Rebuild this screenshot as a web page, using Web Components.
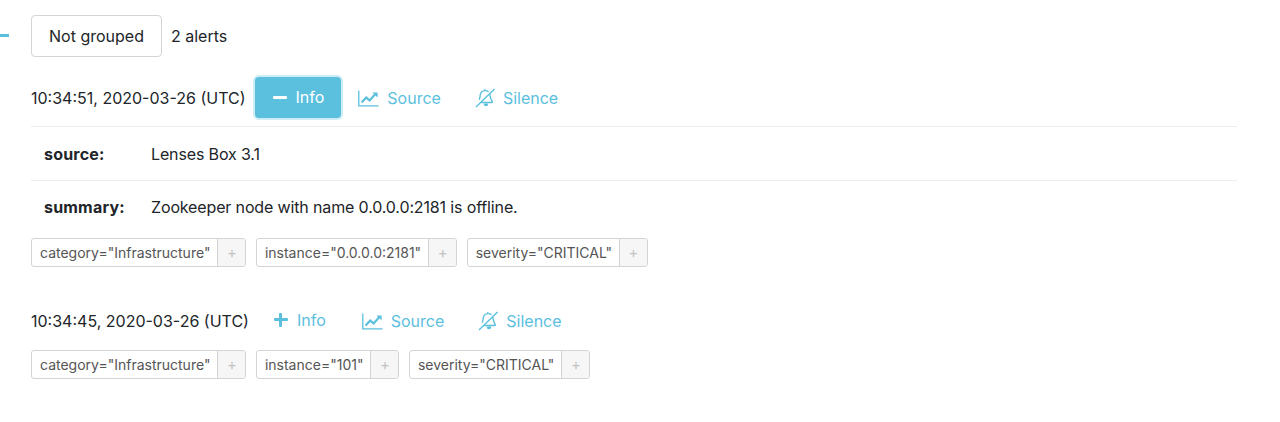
<!DOCTYPE html>
<html>
<head>
<meta charset="utf-8">
<style>
    html, body { margin: 0; background: #fff; }
    body { font-family: Inter, "Liberation Sans", sans-serif; color: #212529; overflow: hidden; height: 422px; }
</style>
</head>
<body>
<alert-group>
    <alert-entry time="10:34:51, 2020-03-26 (UTC)" open>
        <alert-annotation name="source">Lenses Box 3.1</alert-annotation>
        <alert-annotation name="summary">Zookeeper node with name 0.0.0.0:2181 is offline.</alert-annotation>
        <label-tag slot="tags">category="Infrastructure"</label-tag>
        <label-tag slot="tags">instance="0.0.0.0:2181"</label-tag>
        <label-tag slot="tags">severity="CRITICAL"</label-tag>
    </alert-entry>
    <alert-entry time="10:34:45, 2020-03-26 (UTC)">
        <label-tag slot="tags">category="Infrastructure"</label-tag>
        <label-tag slot="tags">instance="101"</label-tag>
        <label-tag slot="tags">severity="CRITICAL"</label-tag>
    </alert-entry>
</alert-group>

<script>
class AlertGroup extends HTMLElement {
    constructor() {
        super();
        const shadow = this.attachShadow({ mode: 'open' });
        shadow.innerHTML = `
            <style>
                :host { display: block; padding: 15px 43px 0 0; }
                .head { display: flex; align-items: center; height: 42px; }
                .dash { width: 9px; height: 3px; margin-top: -1px; background: #5bc0de; margin-right: 22px; }
                .group {
                    box-sizing: border-box; height: 42px; width: 131px;
                    display: flex; align-items: center; justify-content: center;
                    border: 1px solid #d4d4d4; border-radius: 4px;
                    font-size: 16px; color: #212529; background: #fff;
                }
                .count { margin-left: 9px; font-size: 16px; }
                .list { padding-left: 31px; padding-top: 20px; }
            </style>
            <div class="head">
                <span class="dash"></span>
                <span class="group">Not grouped</span>
                <span class="count">2 alerts</span>
            </div>
            <div class="list"><slot></slot></div>
        `;
    }
}

const chartIcon = `<svg width="21" height="17" viewBox="0 0 21 17" fill="none" stroke="currentColor">
    <path d="M.8 .5V15.9H20.5" stroke-width="1.3"/>
    <path d="M3.6 12.6 8.2 7.6l3.4 2.8 6.2-6.8" stroke-width="2.2"/>
    <path d="M14.4 2.4h5.2v5.2z" fill="currentColor" stroke="none"/>
</svg>`;

const bellIcon = `<svg width="20" height="20" viewBox="0 0 20 20" fill="none" stroke="currentColor" stroke-width="1.4" stroke-linejoin="round">
    <path d="M1 19 19.5 1"/>
    <path d="M4.2 11.8C5 10 5 8.8 5.2 7.2 5.6 4.4 7.6 2.8 9.8 2.6c1.5-.1 2.8.3 3.8 1.2"/>
    <path d="M14.8 6.2c.5 2.6.7 5.2 2.4 7.3.3.4.1 1-.4 1H6.2"/>
    <path d="M9.4 16.2c.2 1.8 3 1.8 3.2 0z" fill="currentColor"/>
    <path d="M9.8 2.6V1.2"/>
</svg>`;

class AlertEntry extends HTMLElement {
    constructor() {
        super();
        const shadow = this.attachShadow({ mode: 'open' });
        const open = this.hasAttribute('open');
        const sign = open
            ? `<span class="sign"><i class="h"></i></span>`
            : `<span class="sign"><i class="h"></i><i class="v"></i></span>`;
        shadow.innerHTML = `
            <style>
                :host { display: block; margin-bottom: 33px; }
                :host(:last-child) { margin-bottom: 0; }
                .bar { display: flex; align-items: center; height: 42px; font-size: 16px; }
                .time { margin-right: 9px; white-space: nowrap; }
                .btn {
                    display: flex; align-items: center; gap: 8px;
                    box-sizing: border-box; height: 42px; padding: 0 12px;
                    color: #5bc0de; font-size: 16px; border-radius: 4px; white-space: nowrap;
                }
                .btn.info { gap: 9px; padding: 0 24px 0 16px; margin-top: -3px; }
                .btn.info.open {
                    background: #5bc0de; color: #fff;
                    box-shadow: 0 0 0 2px rgba(91,192,222,.3);
                    height: 41px; align-self: flex-start;
                    margin: 0 5px 0 0; padding: 0 17px 1px 18px;
                }
                .btn.silence { margin-left: 10px; }
                .sign { position: relative; display: block; width: 14px; height: 14px; }
                .sign i { position: absolute; background: currentColor; border-radius: 1px; }
                .sign .h { left: 0; right: 0; top: 5.5px; height: 3px; }
                .sign .v { top: 0; bottom: 0; left: 5.5px; width: 3px; }
                .details { border-top: 1px solid #ececec; margin-top: 7px; }
                .details.empty { display: none; }
                .tags { display: flex; gap: 9.5px; margin-top: 8px; }
                :host([open]) .tags { margin-top: 5px; }
            </style>
            <div class="bar">
                <span class="time"></span>
                <span class="btn info ${open ? 'open' : ''}">${sign}Info</span>
                <span class="btn">${chartIcon}Source</span>
                <span class="btn silence">${bellIcon}Silence</span>
            </div>
            <div class="details ${open ? '' : 'empty'}"><slot></slot></div>
            <div class="tags"><slot name="tags"></slot></div>
        `;
        shadow.querySelector('.time').textContent = this.getAttribute('time');
    }
}

class AlertAnnotation extends HTMLElement {
    constructor() {
        super();
        const shadow = this.attachShadow({ mode: 'open' });
        shadow.innerHTML = `
            <style>
                :host {
                    display: flex; align-items: center; height: 53px;
                    font-size: 16px; border-top: 1px solid #ececec;
                    box-sizing: border-box; padding-left: 13px;
                }
                :host(:first-child) { border-top: 0; }
                b { width: 107px; font-weight: 700; letter-spacing: .2px; }
                span { letter-spacing: -.14px; }
            </style>
            <b></b><span><slot></slot></span>
        `;
        shadow.querySelector('b').textContent = this.getAttribute('name') + ':';
    }
}

class LabelTag extends HTMLElement {
    constructor() {
        super();
        const shadow = this.attachShadow({ mode: 'open' });
        shadow.innerHTML = `
            <style>
                :host {
                    display: inline-flex; box-sizing: border-box; height: 29px;
                    border: 1px solid #d4d4d4; border-radius: 3px;
                    font-size: 14px; color: #555; background: #fff; overflow: hidden;
                }
                .text { display: flex; align-items: center; padding: 0 7px 0 8px; white-space: nowrap; }
                .plus {
                    display: flex; align-items: center; justify-content: center;
                    width: 27px; background: #f6f6f6; border-left: 1px solid #d4d4d4;
                    color: #c4c4c4; font-size: 15px;
                }
            </style>
            <span class="text"><slot></slot></span><span class="plus">+</span>
        `;
    }
}

customElements.define('alert-group', AlertGroup);
customElements.define('alert-entry', AlertEntry);
customElements.define('alert-annotation', AlertAnnotation);
customElements.define('label-tag', LabelTag);
</script>
</body>
</html>
